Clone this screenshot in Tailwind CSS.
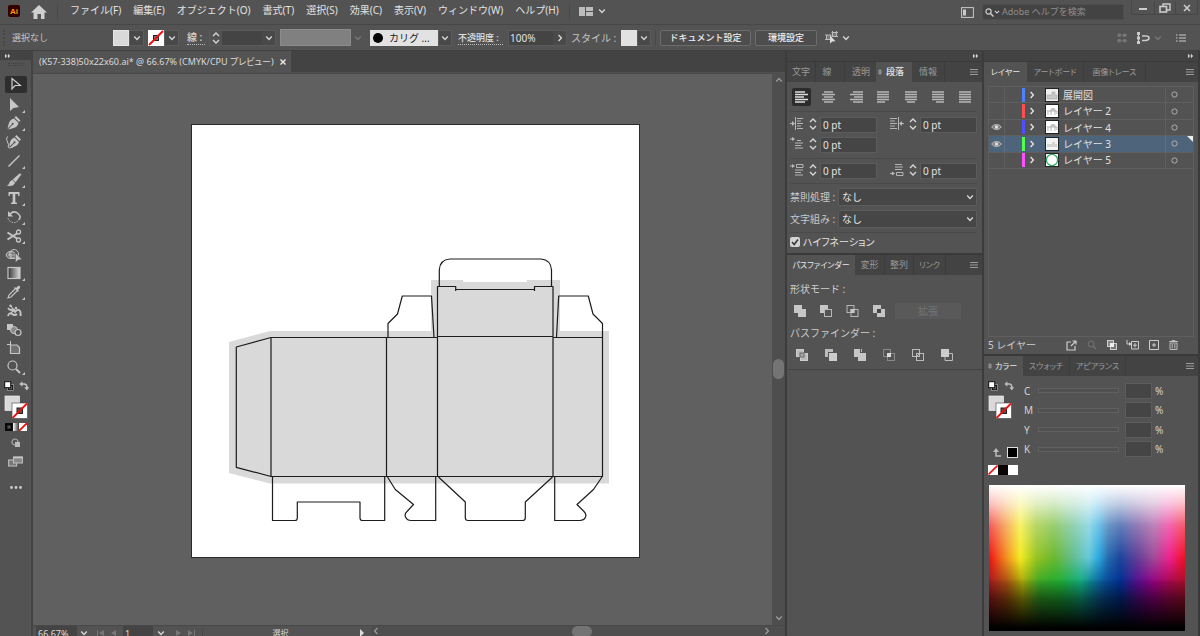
<!DOCTYPE html>
<html lang="ja">
<head>
<meta charset="utf-8">
<title>Illustrator</title>
<script src="https://cdn.jsdelivr.net/npm/@tailwindcss/browser@4"></script>
</head>
<body class="h-screen overflow-hidden flex flex-col bg-[#535353] text-[#d6d6d6] text-[10px] leading-4 font-['Noto_Sans','Noto_Sans_CJK_JP',sans-serif]">
<svg class="hidden" aria-hidden="true">
  <symbol id="down" viewBox="0 0 8 8"><path d="M1.2 2.6 4 5.4 6.8 2.6" fill="none" stroke="currentColor" stroke-width="1.4"/></symbol>
  <symbol id="right" viewBox="0 0 8 8"><path d="M2.6 1 5.4 4 2.6 7" fill="none" stroke="currentColor" stroke-width="1.4"/></symbol>
  <symbol id="left" viewBox="0 0 8 8"><path d="M5.4 1 2.6 4 5.4 7" fill="none" stroke="currentColor" stroke-width="1.2"/></symbol>
  <symbol id="updown" viewBox="0 0 8 14"><path d="M1 5 4 2 7 5M1 9 4 12 7 9" fill="none" stroke="currentColor" stroke-width="1.4"/></symbol>
  <symbol id="more" viewBox="0 0 6 6"><path d="M0 1 2 3 0 5ZM3 1 5 3 3 5Z" fill="currentColor" stroke="currentColor" stroke-width=".3"/></symbol>
  <symbol id="menu" viewBox="0 0 8 8"><path d="M0 1.5H8M0 4H8M0 6.5H8" stroke="currentColor" stroke-width="1.2"/></symbol>
  <symbol id="cycle" viewBox="0 0 4 6"><path d="M.5 2.2 2 .6 3.5 2.2ZM.5 3.8 2 5.4 3.5 3.8Z" fill="none" stroke="currentColor" stroke-width=".5"/></symbol>
  <symbol id="corner" viewBox="0 0 3 3"><path d="M3 0V3H0Z" fill="currentColor"/></symbol>
  <symbol id="eye" viewBox="0 0 12 8"><path d="M.8 4C3 .4 9 .4 11.2 4 9 7.6 3 7.6.8 4Z" fill="#7f7f7f" stroke="#c4c4c4" stroke-width="1"/><circle cx="6" cy="4" r="1.8" fill="#e0e0e0"/></symbol>
  <symbol id="defaults" viewBox="0 0 10 10"><rect x="3.5" y="3.5" width="6" height="6" fill="#111" stroke="#aaa" stroke-width=".7"/><rect x="5" y="5" width="3.2" height="3.2" fill="#666"/><rect x=".7" y=".7" width="6" height="6" fill="#fff" stroke="#111" stroke-width="1"/></symbol>
  <symbol id="swap" viewBox="0 0 10 10"><path d="M2.5 3H5Q8 3 8 7" fill="none" stroke="currentColor" stroke-width="1.6"/><path d="M3.4.3V5.7L.4 3ZM5.3 6.3H10.2L7.8 9.6Z" fill="currentColor"/></symbol>
  <symbol id="swatches" viewBox="0 0 24 24"><rect x="1" y="1" width="14.500" height="14.500" fill="#d9d9d9" stroke="#eee" stroke-width=".7"/><rect x="8" y="8" width="15.500" height="15.500" fill="#fff" stroke="#444" stroke-width=".6"/><rect x="13" y="13" width="5.500" height="5.500" fill="#535353" stroke="#222"/><path d="M8.500 23 23 8.500" stroke="#f01010" stroke-width="1.800"/></symbol>
  <symbol id="none" viewBox="0 0 10 10"><path fill="#fff" d="M0 0H10V10H0Z"/><path d="M.5 9.500 9.500.500" stroke="#f01010" stroke-width="1.600"/></symbol>
</svg>

<header class="h-[25px] shrink-0 flex items-start border-b border-[#474747] pt-px">
  <svg class="w-3 h-3 ml-2 mt-1" viewBox="0 0 12 12" aria-label="Ai"><rect width="12" height="12" rx="2" fill="#330000"/><text x="6" y="8.800" text-anchor="middle" font-family="Liberation Sans" font-weight="bold" font-size="8" fill="#ff9a00">Ai</text></svg>
  <svg class="w-4 h-4 ml-[11px] mt-[3px]" viewBox="0 0 16 16"><path d="M8 1 16 8.500H13.500V15H10V10H6.500V15H2.500V8.500H0Z" fill="#d0d0d0"/></svg>
  <div class="w-px h-4 bg-[#484848] ml-[10px] mt-[3px]"></div>
  <nav class="flex gap-3 ml-3 mt-px text-[#e2e2e2]">
    <button>ファイル(F)</button><button>編集(E)</button><button>オブジェクト(O)</button><button>書式(T)</button><button>選択(S)</button><button>効果(C)</button><button>表示(V)</button><button>ウィンドウ(W)</button><button>ヘルプ(H)</button>
  </nav>
  <div class="w-px h-4 bg-[#484848] ml-[10px] mt-[3px]"></div>
  <button class="flex items-center gap-[5px] ml-[9px] mt-[5px]" aria-label="ワークスペース">
    <svg class="w-[14px] h-[10px]" viewBox="0 0 14 10"><path d="M0 1H6V10H0ZM7 1H14V5H7ZM7 6H14V10H7Z" fill="#bdbdbd"/></svg>
    <svg class="w-2 h-2"><use href="#down"/></svg>
  </button>
  <div class="ml-auto flex items-start">
    <svg class="w-[13px] h-[11px] mt-[6px] mr-2" viewBox="0 0 13 11"><rect x=".600" y=".600" width="11.800" height="9.800" fill="none" stroke="#c8c8c8"/><path d="M2 2.500H5V8.500H2Z" fill="#c8c8c8"/></svg>
    <label class="flex items-center w-[142px] h-4 mt-[3px] px-[2px] bg-[#434343] border border-[#4e4e4e] rounded-xs">
      <svg class="w-[9px] h-[9px]" viewBox="0 0 9 9"><circle cx="3.500" cy="3.500" r="2.600" fill="none" stroke="#ccc" stroke-width="1.200"/><path d="M5.500 5.500 8.500 8.500" stroke="#ccc" stroke-width="1.500"/></svg>
      <svg class="w-[6px] h-[6px]"><use href="#down"/></svg>
      <input class="flex-1 min-w-0 ml-[2px] text-[9px] placeholder:text-[#8e8e8e] outline-none bg-transparent" aria-label="検索" placeholder="Adobe ヘルプを検索">
    </label>
    <div class="flex ml-[7px] h-[14px] border border-t-0 border-[#474747] rounded-b-xs mr-[2px]">
      <button class="w-[22px] flex justify-center items-center" aria-label="最小化"><svg class="w-2 h-2" viewBox="0 0 8 8"><path d="M0 5H8" stroke="#ccc" stroke-width="2"/></svg></button>
      <button class="w-[22px] flex justify-center items-center border-x border-[#474747]" aria-label="元に戻す"><svg class="w-3 h-[10px]" viewBox="0 0 12 10"><path d="M4 3V1H11V7H8" fill="none" stroke="#ccc" stroke-width="1.400"/><rect x="1" y="3.500" width="6.500" height="5.500" fill="none" stroke="#ccc" stroke-width="1.600"/></svg></button>
      <button class="w-[21px] flex justify-center items-center" aria-label="閉じる"><svg class="w-2 h-2" viewBox="0 0 8 8"><path d="M1 1 7 7M7 1 1 7" stroke="#ccc" stroke-width="1.600"/></svg></button>
    </div>
  </div>
</header>

<section class="h-[26px] shrink-0 flex items-center border-b border-[#404040]">
  <div class="w-[2px] h-4 ml-[3px] border-l-2 border-dotted border-[#474747]"></div>
  <p class="w-[97px] ml-[7px] text-[9px] text-[#c4c4c4]">選択なし</p>
  <div class="flex ml-1 h-4"><button class="w-4 bg-[#d9d9d9] border border-[#e6e6e6]" aria-label="塗り"></button><button class="w-[15px] bg-[#494949] border border-[#5c5c5c] grid place-items-center" aria-label="塗りメニュー"><svg class="w-2 h-2"><use href="#down"/></svg></button></div>
  <div class="flex ml-1 h-4"><button class="w-4" aria-label="線の色"><svg class="w-4 h-4" viewBox="0 0 16 16"><path fill="#fff" d="M0 0H16V16H0Z"/><rect x="5.500" y="5.500" width="5" height="5" fill="#777" stroke="#222"/><path d="M1 15 15 1" stroke="#f01010" stroke-width="2"/></svg></button><button class="w-[15px] bg-[#494949] border border-[#5c5c5c] grid place-items-center" aria-label="線メニュー"><svg class="w-2 h-2"><use href="#down"/></svg></button></div>
  <label for="sw" class="w-[18px] ml-2 border-b border-dotted border-[#bbb] whitespace-nowrap leading-[13px] font-medium">線 :</label>
  <div class="flex ml-1 h-4 border border-[#5a5a5a]">
    <button class="w-3 grid place-items-center" aria-label="線幅の増減"><svg class="w-2 h-[14px]"><use href="#updown"/></svg></button>
    <input id="sw" class="w-[40px] bg-[#444] outline-none">
    <button class="w-[13px] bg-[#494949] grid place-items-center" aria-label="線幅"><svg class="w-2 h-2"><use href="#down"/></svg></button>
  </div>
  <div class="flex ml-1 h-[17px]"><div class="w-[71px] bg-[#808080] border border-[#8c8c8c]"></div><button class="w-[14px] grid place-items-center text-[#777]" disabled aria-label="可変線幅"><svg class="w-2 h-2"><use href="#down"/></svg></button></div>
  <div class="flex ml-[5px] h-4">
    <button class="w-[68px] bg-[#e2e2e2] text-[#222] flex items-center gap-[6px] pl-[3px] whitespace-nowrap"><svg class="w-[10px] h-[10px]" viewBox="0 0 10 10"><circle cx="5" cy="5" r="5"/></svg>カリグ ...</button>
    <button class="w-[14px] bg-[#494949] border border-[#5c5c5c] grid place-items-center" aria-label="ブラシ"><svg class="w-2 h-2"><use href="#down"/></svg></button>
  </div>
  <label for="op" class="w-[45px] ml-[6px] text-[9px] font-medium border-b border-dotted border-[#bbb] whitespace-nowrap leading-[13px] text-[#e0e0e0]">不透明度 :</label>
  <div class="flex ml-[5px] h-4 border border-[#5a5a5a]">
    <input id="op" class="w-[44px] bg-[#444] outline-none px-px text-[#e2e2e2]" value="100%">
    <button class="w-[13px] bg-[#494949] grid place-items-center" aria-label="不透明度スライダー"><svg class="w-2 h-2"><use href="#right"/></svg></button>
  </div>
  <span class="w-[50px] ml-1 whitespace-nowrap text-[#c4c4c4]">スタイル :</span>
  <div class="flex h-4"><button class="w-4 bg-[#e2e2e2]" aria-label="グラフィックスタイル"></button><button class="w-[14px] bg-[#494949] border border-[#5c5c5c] grid place-items-center" aria-label="スタイルメニュー"><svg class="w-2 h-2"><use href="#down"/></svg></button></div>
  <div class="w-px h-4 bg-[#494949] ml-1"></div>
  <button class="w-[91px] h-4 ml-1 border border-[#6c6c6c] rounded-xs bg-[#4d4d4d] text-[9px] leading-3 font-medium text-[#eee] whitespace-nowrap">ドキュメント設定</button>
  <button class="w-[62px] h-4 ml-1 border border-[#6c6c6c] rounded-xs bg-[#4d4d4d] text-[9px] leading-3 font-medium text-[#eee]">環境設定</button>
  <button class="flex items-center ml-2 gap-1" aria-label="類似オブジェクトを選択"><svg class="w-[13px] h-[13px]" viewBox="0 0 13 13"><rect x="1.500" y="4" width="4.500" height="4.500" fill="#777" stroke="#bbb"/><rect x="7.500" y="1.500" width="4" height="4" fill="#777" stroke="#bbb"/><path d="M0 4H1M0 8.500H1M6.500 1.500H7.500M11.500 1.500H13M11.500 5.500H13M7.500 0V1M11.500 0V1" stroke="#bbb"/><path d="M5 4.500V12.500L7.300 10.500 10.500 10.300Z" fill="#ddd"/></svg><svg class="w-2 h-2"><use href="#down"/></svg></button>
  <div class="ml-auto flex items-center mr-[14px]">
    <svg class="w-[10px] h-[10px] mr-[10px]" viewBox="0 0 10 10"><path d="M1 1H3.500V3.500H1ZM6.500 1H9V3.500H6.500ZM1 6.500H3.500V9H1ZM6.500 6.500H9V9H6.500ZM0 2H10M0 7.800H10" fill="#777" stroke="#777" stroke-width=".800"/></svg>
    <svg class="w-[13px] h-3 mr-1" viewBox="0 0 13 12"><path d="M0 0H3V3H0ZM0 4.500H3V7.500H0ZM0 9H3V12H0ZM1 0H2V12H1Z" fill="#ccc"/><path d="M5 4H9Q12 4 12 6T9 8.500H5" fill="none" stroke="#ccc" stroke-width="1.600"/></svg>
    <svg class="w-2 h-2 mr-[14px] text-[#777]"><use href="#down"/></svg>
    <svg class="w-[10px] h-2" viewBox="0 0 10 8"><path d="M0 1H1.500M0 4H1.500M0 7H1.500M3 1H10M3 4H10M3 7H10" stroke="#ccc" stroke-width="1.100"/></svg>
  </div>
</section>

<main class="flex-1 min-h-0 flex">
  <aside class="w-[33px] shrink-0 border-r-2 border-[#434343] flex flex-col items-center">
    <div class="w-full h-[9px] bg-[#434343] pl-[5px]"><svg class="w-[6px] h-[6px] mt-[2px]"><use href="#more"/></svg></div>
    <div class="w-4 h-[3px] mt-[3px] border-y border-dotted border-[#414141]"></div>
    <div class="grid grid-rows-16 h-[300px] mt-[9px] text-[#c6c6c6]">
      <button class="w-[22px] h-[17px] rounded-xs bg-[#2e2e2e] grid place-items-center self-center" aria-label="選択"><svg class="w-3 h-[14px]" viewBox="0 0 12 14"><path d="M2 1.500V12L5 8.500 10.500 8.500Z" fill="none" stroke="#d0d0d0" stroke-width="1.200"/></svg></button>
      <button class="flex items-end justify-center" aria-label="ダイレクト選択"><svg class="w-4 h-4" viewBox="0 0 16 16"><path d="M4 1V14L7.500 11 13 10Z" fill="currentColor"/></svg><svg class="w-[3px] h-[3px]"><use href="#corner"/></svg></button>
      <button class="flex items-end justify-center" aria-label="ペン"><svg class="w-4 h-4" viewBox="0 0 16 16"><path d="M10 1 14.500 5.500 13 7 8.500 2.500ZM8 3.500 12.500 8Q11.500 12.500 6 13.500L2 14.500 6.500 9.800A1 1 0 1 0 5.800 9.200L1.500 13.800 2.500 9.500Q3.500 4.500 8 3.500Z" fill="currentColor"/></svg><svg class="w-[3px] h-[3px]"><use href="#corner"/></svg></button>
      <button class="flex items-end" aria-label="曲線"><svg class="w-[17px] h-4" viewBox="0 0 17 16"><path d="M11.500 1 16 5.500 14.500 7 10 2.500ZM9.500 3.500 14 8Q13 12.500 5 14L9.300 9.300A1 1 0 1 0 8.600 8.600L4.500 13Q4 5 9.500 3.500Z" fill="currentColor"/><path d="M2.500 2.500Q.5 5 2.500 8T3 13Q4 15 8 13" fill="none" stroke="currentColor"/></svg></button>
      <button class="flex items-end justify-center" aria-label="直線"><svg class="w-4 h-4" viewBox="0 0 16 16"><path d="M2.500 13.500 13.500 2.500" stroke="currentColor" stroke-width="1.400"/></svg><svg class="w-[3px] h-[3px]"><use href="#corner"/></svg></button>
      <button class="flex items-end justify-center" aria-label="ブラシ"><svg class="w-4 h-4" viewBox="0 0 16 16"><path d="M14 1.500 15 2.500 9.500 10 7 7.500ZM6.300 8.300 8.800 10.800Q7.500 14.500 1.500 13.500 3.500 12.500 3.500 11T6.300 8.300Z" fill="currentColor" stroke="currentColor" stroke-width=".600"/></svg><svg class="w-[3px] h-[3px]"><use href="#corner"/></svg></button>
      <button class="flex items-end justify-center" aria-label="文字"><svg class="w-4 h-4" viewBox="0 0 16 16"><path d="M2.500 2H13.500V6H12.300L11.800 4H9.300V12.300L11 12.800V14H5V12.800L6.700 12.300V4H4.200L3.700 6H2.500Z" fill="currentColor"/></svg><svg class="w-[3px] h-[3px]"><use href="#corner"/></svg></button>
      <button class="flex items-end justify-center" aria-label="回転"><svg class="w-4 h-4" viewBox="0 0 16 16"><path d="M4 5Q8 1 12 4.500T12.500 11" fill="none" stroke="currentColor" stroke-width="1.600"/><path d="M12 12Q8 15 4.500 12.500T2.500 8" fill="none" stroke="currentColor" stroke-dasharray="1.500 1.200"/><path d="M2 2V7.500H7Z" fill="currentColor"/></svg><svg class="w-[3px] h-[3px]"><use href="#corner"/></svg></button>
      <button class="flex items-end justify-center" aria-label="はさみ"><svg class="w-4 h-4" viewBox="0 0 16 16"><path d="M1.500 4.500 11 10.500M1.500 11.500 11 5.500" stroke="currentColor" stroke-width="2"/><circle cx="12.500" cy="4" r="2" fill="none" stroke="currentColor" stroke-width="1.300"/><circle cx="12.500" cy="12" r="2" fill="none" stroke="currentColor" stroke-width="1.300"/></svg><svg class="w-[3px] h-[3px]"><use href="#corner"/></svg></button>
      <button class="flex items-end" aria-label="シェイプ形成"><svg class="w-[18px] h-4" viewBox="0 0 18 16"><ellipse cx="6" cy="8" rx="4.800" ry="3.600" fill="#777" stroke="currentColor"/><circle cx="9" cy="7" r="4.500" fill="none" stroke="currentColor"/><path d="M3 8H10M6 5V11" stroke="currentColor" stroke-width=".800"/><path d="M10.500 6V15.500L13 13 17 12.500Z" fill="currentColor" stroke="#535353" stroke-width=".500"/></svg></button>
      <button class="flex items-end justify-center" aria-label="グラデーション"><svg class="w-4 h-4" viewBox="0 0 16 16"><defs><linearGradient id="tg"><stop stop-color="#333"/><stop offset="1" stop-color="#ddd"/></linearGradient></defs><rect x="2" y="2.500" width="12" height="11" fill="url(#tg)" stroke="currentColor" stroke-width="1.200"/></svg><svg class="w-[3px] h-[3px]"><use href="#corner"/></svg></button>
      <button class="flex items-end justify-center" aria-label="スポイト"><svg class="w-4 h-4" viewBox="0 0 16 16"><path d="M9 5 3 11 2 14 5 13 11 7" fill="none" stroke="currentColor" stroke-width="1.100"/><path d="M8 4 9 3 10 4 12 2Q14.500 1 14 4L12 6 13 7 12 8Z" fill="currentColor"/></svg><svg class="w-[3px] h-[3px]"><use href="#corner"/></svg></button>
      <button class="flex items-end justify-center" aria-label="パペットワープ"><svg class="w-4 h-4" viewBox="0 0 16 16"><path d="M2 5Q4 8 7 6.500L9 9Q11 6 13 7T14.500 13M2 13Q3 9 6 11T11 11" fill="none" stroke="currentColor" stroke-width="1.900"/><path d="M5 3 8 8M4 11 9 6" stroke="currentColor" stroke-width="1.200"/><circle cx="4.500" cy="2.800" r="1.200" fill="currentColor"/><circle cx="10" cy="5" r="1.200" fill="currentColor"/></svg><svg class="w-[3px] h-[3px]" viewBox="0 0 3 3"></svg></button>
      <button class="flex items-end justify-center" aria-label="ブレンド"><svg class="w-4 h-4" viewBox="0 0 16 16"><path d="M1 2H7V8H1Z" fill="currentColor"/><circle cx="8" cy="8" r="3.500" fill="#888" stroke="currentColor"/><circle cx="12" cy="10.500" r="3" fill="#535353" stroke="currentColor" stroke-width="1.200"/></svg><svg class="w-[3px] h-[3px]" viewBox="0 0 3 3"></svg></button>
      <button class="flex items-end justify-center" aria-label="アートボード"><svg class="w-4 h-4" viewBox="0 0 16 16"><path d="M4.500 1V5M1 4.500H4" stroke="currentColor"/><path d="M4.500 5H11L13.500 7.500V13.500H4.500Z" fill="#707070" stroke="currentColor" stroke-width="1.200"/></svg><svg class="w-[3px] h-[3px]" viewBox="0 0 3 3"></svg></button>
      <button class="flex items-end justify-center" aria-label="ズーム"><svg class="w-4 h-4" viewBox="0 0 16 16"><circle cx="6.500" cy="6.500" r="4.500" fill="none" stroke="currentColor" stroke-width="1.200"/><path d="M10 10 14 14" stroke="currentColor" stroke-width="1.800"/></svg><svg class="w-[3px] h-[3px]"><use href="#corner"/></svg></button>
    </div>
    <div class="flex w-full h-3 mt-[5px] pl-1 pr-[2px] justify-between items-center text-[#c6c6c6]"><svg class="w-[10px] h-[10px]"><use href="#defaults"/></svg><svg class="w-[10px] h-[10px]"><use href="#swap"/></svg></div>
    <svg class="w-6 h-6 shrink-0 mt-[3px]"><use href="#swatches"/></svg>
    <svg class="w-[22px] h-2 shrink-0 mt-1" viewBox="0 0 22 8"><rect width="8" height="8" fill="#0a0a0a"/><rect x="2.500" y="2.500" width="3" height="3" fill="#555"/><defs><linearGradient id="mg"><stop stop-color="#fff"/><stop offset="1" stop-color="#333"/></linearGradient></defs><rect x="8" width="6" height="8" fill="url(#mg)"/><rect x="14" width="8" height="8" fill="#fff"/><path d="M14 8 22 0" stroke="#f01010" stroke-width="1.800"/></svg>
    <svg class="w-[10px] h-[10px] shrink-0 mt-[7px]" viewBox="0 0 10 10"><circle cx="4" cy="4" r="3" fill="none" stroke="#aaa" stroke-width="1.200"/><path d="M4 4H9V9H4Z" fill="#bbb"/></svg>
    <svg class="w-[15px] h-[11px] shrink-0 mt-2" viewBox="0 0 15 11"><rect x=".6" y="4" width="8" height="6" fill="#777" stroke="#bbb" stroke-width="1.100"/><rect x="5.500" y="1" width="9" height="6" fill="#888" stroke="#bbb" stroke-width="1.100"/><path d="M5.500 1.500H14.500" stroke="#ccc" stroke-width="1.500"/></svg>
    <svg class="w-3 h-[3px] shrink-0 mt-[19px]" viewBox="0 0 12 3"><path d="M1.500 1.500H1.510M6 1.500H6.010M10.500 1.500H10.510" stroke="#ccc" stroke-width="2.800" stroke-linecap="round"/></svg>
  </aside>

  <section class="flex-1 min-w-0 flex flex-col">
    <div class="h-[22px] shrink-0 bg-[#434343] border-b border-[#505050] flex">
      <div class="w-[258px] bg-[#535353] flex items-center pl-[6px] pr-[5px] justify-between text-[#dadada]"><span class="whitespace-nowrap text-[9px] [font-feature-settings:'palt']">(K57-338)50x22x60.ai* @ 66.67% (CMYK/CPU プレビュー)</span>
      <button aria-label="閉じる"><svg class="w-[6px] h-[6px]" viewBox="0 0 6 6"><path d="M.500.500 5.500 5.500M5.500.500.500 5.500" stroke="#eee" stroke-width="1.400"/></svg></button></div>
    </div>
    <div class="flex-1 min-h-0 flex">
      <div class="flex-1 min-w-0 overflow-hidden bg-[#606060] border-t border-[#4a4a4a] pl-[158px] pt-[50px]">
        <svg class="w-[449px] h-[434px]" viewBox="191 124 449 434" aria-label="箱の展開図">
          <rect x="191.500" y="124.500" width="448" height="433" fill="#fff" stroke="#2a2a2a"/>
          <path d="M229 342 270 331H431V280H463V282H527V280H560V331H609V483.500H270L229 473Z" fill="#d9d9d9"/>
          <g fill="none" stroke="#1c1c1c" stroke-width="1.200" stroke-linejoin="round">
            <path d="M271 337.500 236.300 347V467.300L271 476.500M271 337.500H437.500M553 337.500H602.500V476.500H271V337.500M386.500 337.500V476.500M437.500 476.500V286.500H455.700V291M455.700 289.500H534.500M534.500 291V286.500H553V476.500M437.500 336.500H553"/>
            <path d="M439.300 286.500V270Q440 259.500 450 259H541Q551 260 551.500 270V286.500"/>
            <path d="M388 337.500V323.500L397.500 314 402.300 296H431.500L434 337.500M556.500 337.500 558.700 296H588.300L593 314 602.500 323.500V337.500"/>
            <path d="M272.500 476.500V520.500H295Q297.300 520.500 297.300 518V502H360V518Q360 520.500 362.500 520.500H384.700V476.500"/>
            <path d="M387.500 477 395.300 489.500 413.500 504.500 407 511.500C403 515 406 520.500 411 520.500H435.700V477"/>
            <path d="M438.500 477 465.300 502V518Q465.500 520.500 468 520.500H522.500Q525.300 520.500 525.300 518V502L552.500 477"/>
            <path d="M554.700 477V520.500H580C585 520.500 588 515.500 584 511.500L577 504.500 593.500 489.500 602 477"/>
          </g>
        </svg>
      </div>
      <div class="w-[13px] bg-[#4e4e4e] flex flex-col items-center justify-between py-[3px] text-[#999]">
        <svg class="w-2 h-2 rotate-180"><use href="#down"/></svg>
        <div class="w-[11px] h-5 rounded-full bg-[#747474] mt-[40px]"></div>
        <svg class="w-2 h-2"><use href="#down"/></svg>
      </div>
    </div>
    <div class="h-[11px] shrink-0 overflow-hidden border-t border-[#484848]">
      <div class="h-[14px] flex items-center text-[9px] leading-none">
        <input class="w-[41px] h-full ml-[3px] px-[2px] bg-[#444] outline-none text-[#ddd]" value="66.67%" aria-label="ズーム率">
        <button class="w-[14px] grid place-items-center" aria-label="ズームメニュー"><svg class="w-2 h-2"><use href="#down"/></svg></button>
        <svg class="w-[22px] h-2 mx-[5px] text-[#777]" viewBox="0 0 22 8"><path d="M1 1V7H2V1ZM8 1V7L3 4ZM20 1V7L15 4Z" fill="currentColor"/></svg>
        <input class="w-[30px] h-full px-[2px] bg-[#444] outline-none text-[#ddd]" value="1" aria-label="アートボード番号">
        <button class="w-[15px] grid place-items-center" aria-label="アートボードメニュー"><svg class="w-2 h-2"><use href="#down"/></svg></button>
        <svg class="w-[22px] h-2 mx-[6px] text-[#777]" viewBox="0 0 22 8"><path d="M2 1V7L7 4ZM14 1V7L19 4ZM20 1V7H21V1Z" fill="currentColor"/></svg>
        <div class="w-[156px] text-center text-[8px] border-l border-[#484848]">選択</div>
        <svg class="w-2 h-2 mr-[5px]" viewBox="0 0 8 8"><path d="M2 0V8L6 4Z" fill="#ddd"/></svg>
        <div class="flex-1 flex items-center bg-[#4e4e4e] h-full justify-between pl-px pr-[14px] pb-1 text-[#999]"><svg class="w-2 h-2"><use href="#left"/></svg><div class="w-5 h-[11px] rounded-full bg-[#747474] ml-5"></div><svg class="w-2 h-2"><use href="#right"/></svg></div>
      </div>
    </div>
  </section>

  <aside class="w-[199px] shrink-0 border-x-2 border-[#3c3c3c] flex flex-col">
    <div class="h-[10px] bg-[#434343] flex justify-end pr-[3px] pt-[2px]"><svg class="w-[6px] h-[6px]"><use href="#more"/></svg></div>
    <div class="h-[21px] shrink-0 bg-[#434343] flex text-[9px] text-[#9a9a9a] border-t border-[#3a3a3a]">
      <button class="w-[29px] border-r border-[#3c3c3c]">文字</button><button class="w-[29px] border-r border-[#3c3c3c] pr-[6px]">線</button><button class="w-[31px] pl-px">透明</button><button class="w-[36px] bg-[#535353] text-[#e6e6e6] font-medium flex items-center gap-1 pl-[2px]"><svg class="w-1 h-[6px]"><use href="#cycle"/></svg>段落</button><button class="w-[33px] border-r border-[#3c3c3c]">情報</button>
      <button class="ml-auto mr-1" aria-label="パネルメニュー"><svg class="w-2 h-2"><use href="#menu"/></svg></button>
    </div>
    <div class="pl-[3px] pr-[5px] pt-[6px]">
      <div class="flex justify-between items-center pl-[2px] pr-[2px] h-[18px] text-[#b8b8b8]">
        <button class="w-[19px] h-[18px] rounded-xs bg-[#2c2c2c] grid place-items-center" aria-label="左揃え"><svg class="w-[13px] h-3" viewBox="0 0 13 12"><path d="M0 1H10M0 3.500H13M0 6H9M0 8.500H13M0 11H10" stroke="#ddd" stroke-width="1.300"/></svg></button>
        <button class="w-[19px] grid place-items-center" aria-label="中央揃え"><svg class="w-[13px] h-3" viewBox="0 0 13 12"><path d="M2 1H11M0 3.500H13M2 6H11M0 8.500H13M2 11H11" stroke="currentColor" stroke-width="1.300"/></svg></button>
        <button class="w-[19px] grid place-items-center" aria-label="右揃え"><svg class="w-[13px] h-3" viewBox="0 0 13 12"><path d="M3 1H13M0 3.500H13M4 6H13M0 8.500H13M3 11H13" stroke="currentColor" stroke-width="1.300"/></svg></button>
        <button class="w-[19px] grid place-items-center" aria-label="均等配置（最終行左揃え）"><svg class="w-3 h-3" viewBox="0 0 12 12"><path d="M0 1H12M0 3.500H12M0 6H12M0 8.500H12M0 11H8" stroke="currentColor" stroke-width="1.300"/></svg></button>
        <button class="w-[19px] grid place-items-center" aria-label="均等配置（最終行中央揃え）"><svg class="w-3 h-3" viewBox="0 0 12 12"><path d="M0 1H12M0 3.500H12M0 6H12M0 8.500H12M2 11H10" stroke="currentColor" stroke-width="1.300"/></svg></button>
        <button class="w-[19px] grid place-items-center" aria-label="均等配置（最終行右揃え）"><svg class="w-3 h-3" viewBox="0 0 12 12"><path d="M0 1H12M0 3.500H12M0 6H12M0 8.500H12M4 11H12" stroke="currentColor" stroke-width="1.300"/></svg></button>
        <button class="w-[19px] grid place-items-center" aria-label="両端揃え"><svg class="w-3 h-3" viewBox="0 0 12 12"><path d="M0 1H12M0 3.500H12M0 6H12M0 8.500H12M0 11H12" stroke="currentColor" stroke-width="1.300"/></svg></button>
      </div>
      <div class="grid grid-cols-[100px_1fr] gap-y-1 mt-[5px] pt-[5px] border-t border-[#4a4a4a] pb-[5px]">
        <label class="flex h-4"><svg class="w-[14px] h-[14px] mr-[3px]" viewBox="0 0 14 14"><path d="M0 6.500H3M5.500 0V13M7 1.500H13M7 4H11M7 6.500H13M7 9H11M7 11.500H13" stroke="#b5b5b5"/><path d="M2 4 5 6.500 2 9Z" fill="#bbb"/></svg><svg class="w-3 h-[14px] mr-px"><use href="#updown"/></svg><input class="w-[57px] bg-[#454545] border border-[#5c5c5c] px-[2px] outline-none text-[#e2e2e2]" value="0 pt" aria-label="左インデント"></label>
        <label class="flex h-4"><svg class="w-[14px] h-[14px] mr-[3px]" viewBox="0 0 14 14"><path d="M14 6.500H11M8.500 0V13M0 1.500H7M0 4H5M0 6.500H7M0 9H5M0 11.500H7" stroke="#b5b5b5"/><path d="M12 4 9 6.500 12 9Z" fill="#bbb"/></svg><svg class="w-3 h-[14px] mr-px"><use href="#updown"/></svg><input class="w-[57px] bg-[#454545] border border-[#5c5c5c] px-[2px] outline-none text-[#e2e2e2]" value="0 pt" aria-label="右インデント"></label>
        <label class="flex h-4"><svg class="w-[14px] h-[14px] mr-[3px]" viewBox="0 0 14 14"><path d="M0 2H3M7 3.500H11M5 6H13M5 8.500H11M5 11H13" stroke="#b5b5b5"/><path d="M2 0 5 2 2 4Z" fill="#bbb"/></svg><svg class="w-3 h-[14px] mr-px"><use href="#updown"/></svg><input class="w-[57px] bg-[#454545] border border-[#5c5c5c] px-[2px] outline-none text-[#e2e2e2]" value="0 pt" aria-label="1行目左インデント"></label>
      </div>
      <div class="grid grid-cols-[100px_1fr] pt-1 border-t border-[#4a4a4a] pb-1">
        <label class="flex h-4"><svg class="w-[14px] h-[14px] mr-[3px]" viewBox="0 0 14 14"><path d="M0 3H3M6.500 1.500H13V4.500H6.500ZM5 7H13M5 9.500H11M5 12H13" fill="none" stroke="#b5b5b5"/><path d="M2 1 5 3 2 5Z" fill="#bbb"/></svg><svg class="w-3 h-[14px] mr-px"><use href="#updown"/></svg><input class="w-[57px] bg-[#454545] border border-[#5c5c5c] px-[2px] outline-none text-[#e2e2e2]" value="0 pt" aria-label="段落前のアキ"></label>
        <label class="flex h-4"><svg class="w-[14px] h-[14px] mr-[3px]" viewBox="0 0 14 14"><path d="M0 10.500H3M6.500 9.500H13V12.500H6.500ZM5 1.500H12M5 4H13M5 6.500H12" fill="none" stroke="#b5b5b5"/><path d="M2 8.500 5 10.500 2 12.500Z" fill="#bbb"/></svg><svg class="w-3 h-[14px] mr-px"><use href="#updown"/></svg><input class="w-[57px] bg-[#454545] border border-[#5c5c5c] px-[2px] outline-none text-[#e2e2e2]" value="0 pt" aria-label="段落後のアキ"></label>
      </div>
      <div class="border-y border-[#4a4a4a] pt-1 pb-1 grid gap-1">
        <div class="flex items-center"><label for="kin" class="w-[48px] whitespace-nowrap text-[#c8c8c8]">禁則処理 :</label><span class="flex-1 grid items-center"><select id="kin" class="[grid-area:1/1] h-[18px] appearance-none bg-[#464646] border border-[#5c5c5c] rounded-xs px-[3px] outline-none text-[#e6e6e6]"><option>なし</option></select><svg class="[grid-area:1/1] justify-self-end w-2 h-2 mr-[3px] pointer-events-none"><use href="#down"/></svg></span></div>
        <div class="flex items-center"><label for="kumi" class="w-[48px] whitespace-nowrap text-[#c8c8c8]">文字組み :</label><span class="flex-1 grid items-center"><select id="kumi" class="[grid-area:1/1] h-[18px] appearance-none bg-[#464646] border border-[#5c5c5c] rounded-xs px-[3px] outline-none text-[#e6e6e6]"><option>なし</option></select><svg class="[grid-area:1/1] justify-self-end w-2 h-2 mr-[3px] pointer-events-none"><use href="#down"/></svg></span></div>
      </div>
      <label class="flex items-center gap-[3px] h-[18px] text-[#e2e2e2] [font-feature-settings:'palt']"><span class="grid"><input type="checkbox" checked class="[grid-area:1/1] appearance-none w-[10px] h-[10px] rounded-xs bg-[#d2d2d2]"><svg class="[grid-area:1/1] w-[10px] h-[10px] pointer-events-none" viewBox="0 0 10 10"><path d="M2 5 4.200 7.500 8 2.500" fill="none" stroke="#333" stroke-width="1.500"/></svg></span>ハイフネーション</label>
    </div>
    <div class="h-[22px] mt-[2px] shrink-0 bg-[#434343] flex text-[#9a9a9a] border-t-2 border-[#3a3a3a] text-[9px] [font-feature-settings:'palt']">
      <button class="w-[68px] bg-[#535353] text-[#e6e6e6] text-[8px] whitespace-nowrap">パスファインダー</button><button class="w-[30px] border-r border-[#3c3c3c]">変形</button><button class="w-[29px] border-r border-[#3c3c3c]">整列</button><button class="w-[32px] border-r border-[#3c3c3c] text-[8px]">リンク</button>
      <button class="ml-auto mr-1" aria-label="パネルメニュー"><svg class="w-2 h-2"><use href="#menu"/></svg></button>
    </div>
    <div class="px-[3px] pt-[6px] pb-[6px] border-b border-[#444]">
      <p class="text-[#ccc]">形状モード :</p>
      <div class="flex items-center h-4 mt-[6px] pl-1 gap-[14px]">
        <button aria-label="合体"><svg class="w-3 h-3" viewBox="0 0 12 12"><path d="M0 0H8V4H12V12H4V8H0Z" fill="#c6c6c6"/></svg></button>
        <button aria-label="前面オブジェクトで型抜き"><svg class="w-3 h-3" viewBox="0 0 12 12"><path d="M0 0H8V4H4V8H0Z" fill="#c6c6c6"/><rect x="4.500" y="4.500" width="7" height="7" fill="#535353" stroke="#b8b8b8"/></svg></button>
        <button aria-label="交差"><svg class="w-[13px] h-3" viewBox="0 0 12 12"><rect x=".500" y=".500" width="7" height="7" fill="none" stroke="#b8b8b8"/><rect x="4.500" y="4.500" width="7" height="7" fill="none" stroke="#b8b8b8"/><path d="M4 4H8V8H4Z" fill="#c6c6c6"/></svg></button>
        <button aria-label="中マド"><svg class="w-3 h-3" viewBox="0 0 12 12"><path d="M0 0H8V4H12V12H4V8H0Z" fill="#c6c6c6"/><path d="M4 4H8V8H4Z" fill="#444"/></svg></button>
        <button disabled class="w-[66px] h-4 ml-[-4px] bg-[#595959] text-[#747474] leading-3">拡張</button>
      </div>
      <p class="text-[#ccc] mt-[6px]">パスファインダー :</p>
      <div class="flex items-center h-4 mt-[6px] pl-[6px] gap-[17px]">
        <button aria-label="分割"><svg class="w-3 h-3" viewBox="0 0 12 12"><rect x=".500" y=".500" width="7" height="7" fill="#bbb" stroke="#ccc"/><rect x="4.500" y="4.500" width="7" height="7" fill="#bbb" stroke="#ccc"/><rect x="4" y="4" width="4" height="4" fill="#aaa" stroke="#666"/></svg></button>
        <button aria-label="刈り込み"><svg class="w-3 h-3" viewBox="0 0 12 12"><path d="M0 0H8V3H3V8H0Z" fill="#bbb"/><path d="M4 4H12V12H4Z" fill="#ccc"/></svg></button>
        <button aria-label="合流"><svg class="w-3 h-3" viewBox="0 0 12 12"><path d="M0 0H6V4H12V12H4V8H0Z" fill="#c6c6c6"/><path d="M7 0H8V3H7Z" fill="#bbb"/></svg></button>
        <button aria-label="切り抜き"><svg class="w-3 h-3" viewBox="0 0 12 12"><rect x=".500" y=".500" width="7" height="7" fill="none" stroke="#888"/><rect x="4.500" y="4.500" width="7" height="7" fill="none" stroke="#888"/><path d="M4 4H8V8H4Z" fill="#ddd"/></svg></button>
        <button aria-label="アウトライン"><svg class="w-3 h-3" viewBox="0 0 12 12"><rect x=".500" y=".500" width="7" height="7" fill="none" stroke="#bbb"/><rect x="4.500" y="4.500" width="7" height="7" fill="none" stroke="#bbb"/><path d="M4 8 8 4" stroke="#bbb"/></svg></button>
        <button aria-label="背面オブジェクトで型抜き"><svg class="w-3 h-3" viewBox="0 0 12 12"><path d="M4 8V11.500H11.500V4.500H8" fill="none" stroke="#bbb"/><path d="M0 0H8V8H0Z" fill="#ccc"/></svg></button>
      </div>
    </div>
  </aside>

  <aside class="w-[216px] shrink-0 flex flex-col border-r-2 border-[#3a3a3a]">
    <div class="h-[10px] shrink-0 bg-[#434343] flex justify-end pr-1 pt-[2px]"><svg class="w-[6px] h-[6px]"><use href="#more"/></svg></div>
    <div class="h-[21px] shrink-0 bg-[#434343] flex text-[#9a9a9a] text-[8px] [font-feature-settings:'palt'] border-t border-[#3a3a3a]">
      <button class="w-[43px] bg-[#535353] text-[#e6e6e6]">レイヤー</button><button class="w-[57px] border-r border-[#3c3c3c]">アートボード</button><button class="w-[62px] border-r border-[#3c3c3c]">画像トレース</button>
      <button class="ml-auto mr-1" aria-label="パネルメニュー"><svg class="w-2 h-2"><use href="#menu"/></svg></button>
    </div>
    <div class="mx-1 mt-1 h-[251px] shrink-0 border border-[#5f5f5f]">
      <ul class="grid grid-rows-5 h-[82px] text-[#e0e0e0]">
        <li class="flex items-center border-b border-[#5f5f5f]"><span class="w-4 h-full border-r border-[#5f5f5f]"></span><span class="w-[17px]"></span><i class="w-[3px] h-[14px] bg-[#4f80ff]"></i><svg class="w-2 h-2 ml-[3px] mr-1 shrink-0"><use href="#right"/></svg><svg class="w-[14px] h-[14px] ml-[5px] mr-1 shrink-0" viewBox="0 0 14 14"><rect x=".500" y=".500" width="13" height="13" fill="#eee" stroke="#222"/><path d="M2 7H7V4H10V7H12V11H2Z" fill="#c8c8c8" stroke="#999" stroke-width=".500"/></svg><span class="flex-1">展開図</span><button class="w-[28px] h-full pl-[5px] border-l border-[#5f5f5f]" aria-label="ターゲット"><svg class="w-[7px] h-[7px]" viewBox="0 0 8 8"><circle cx="4" cy="4" r="3" fill="none" stroke="#bbb"/></svg></button></li>
        <li class="flex items-center border-b border-[#5f5f5f]"><span class="w-4 h-full border-r border-[#5f5f5f]"></span><span class="w-[17px]"></span><i class="w-[3px] h-[14px] bg-[#ff4f4f]"></i><svg class="w-2 h-2 ml-[3px] mr-1 shrink-0"><use href="#right"/></svg><svg class="w-[14px] h-[14px] ml-[5px] mr-1 shrink-0" viewBox="0 0 14 14"><rect x=".500" y=".500" width="13" height="13" fill="#fff" stroke="#222"/><path d="M2 7H12M3 7V11M6 11V5H10V11M8 4V7M12 7V10" fill="none" stroke="#999" stroke-width=".700"/></svg><span class="flex-1">レイヤー 2</span><button class="w-[28px] h-full pl-[5px] border-l border-[#5f5f5f]" aria-label="ターゲット"><svg class="w-[7px] h-[7px]" viewBox="0 0 8 8"><circle cx="4" cy="4" r="3" fill="none" stroke="#bbb"/></svg></button></li>
        <li class="flex items-center border-b border-[#5f5f5f]"><span class="w-4 h-full border-r border-[#5f5f5f] grid place-items-center"><svg class="w-[11px] h-2"><use href="#eye"/></svg></span><span class="w-[17px]"></span><i class="w-[3px] h-[14px] bg-[#4f4fff]"></i><svg class="w-2 h-2 ml-[3px] mr-1 shrink-0"><use href="#right"/></svg><svg class="w-[14px] h-[14px] ml-[5px] mr-1 shrink-0" viewBox="0 0 14 14"><rect x=".500" y=".500" width="13" height="13" fill="#fff" stroke="#222"/><path d="M2 7H12M3 7V11M6 11V5H10V11M8 4V7M12 7V10" fill="none" stroke="#999" stroke-width=".700"/></svg><span class="flex-1">レイヤー 4</span><button class="w-[28px] h-full pl-[5px] border-l border-[#5f5f5f]" aria-label="ターゲット"><svg class="w-[7px] h-[7px]" viewBox="0 0 8 8"><circle cx="4" cy="4" r="3" fill="none" stroke="#bbb"/></svg></button></li>
        <li class="flex items-center bg-[#4e647b] border-b border-[#5f5f5f]"><span class="w-4 h-full border-r border-[#5f7085] grid place-items-center"><svg class="w-[11px] h-2"><use href="#eye"/></svg></span><span class="w-[17px]"></span><i class="w-[3px] h-[14px] bg-[#4fff4f]"></i><svg class="w-2 h-2 ml-[3px] mr-1 shrink-0"><use href="#right"/></svg><svg class="w-[14px] h-[14px] ml-[5px] mr-1 shrink-0" viewBox="0 0 14 14"><rect x=".500" y=".500" width="13" height="13" fill="#f4f4f4" stroke="#222"/><path d="M2 7H7V5H10V7H12V10H2Z" fill="#d4d4d4"/></svg><span class="flex-1">レイヤー 3</span><button class="w-[28px] h-full pl-[5px] border-l border-[#5f7085] flex items-center" aria-label="ターゲット"><svg class="w-[7px] h-[7px]" viewBox="0 0 8 8"><circle cx="4" cy="4" r="3" fill="none" stroke="#bbb"/></svg><svg class="w-[6px] h-[6px] self-start ml-auto" viewBox="0 0 6 6"><path d="M0 0H6V6Z" fill="#eee"/></svg></button></li>
        <li class="flex items-center border-b border-[#5f5f5f]"><span class="w-4 h-full border-r border-[#5f5f5f]"></span><span class="w-[17px]"></span><i class="w-[3px] h-[14px] bg-[#ff4fff]"></i><svg class="w-2 h-2 ml-[3px] mr-1 shrink-0"><use href="#right"/></svg><svg class="w-[14px] h-[14px] ml-[5px] mr-1 shrink-0" viewBox="0 0 14 14"><rect x=".500" y=".500" width="13" height="13" fill="#fff" stroke="#222"/><circle cx="7" cy="7" r="5.600" fill="#fff" stroke="#2fa866" stroke-width="1.300"/></svg><span class="flex-1">レイヤー 5</span><button class="w-[28px] h-full pl-[5px] border-l border-[#5f5f5f]" aria-label="ターゲット"><svg class="w-[7px] h-[7px]" viewBox="0 0 8 8"><circle cx="4" cy="4" r="3" fill="none" stroke="#bbb"/></svg></button></li>
      </ul>
    </div>
    <div class="h-4 shrink-0 flex items-center pl-1 pr-[20px] text-[#ccc]">
      <span class="mr-auto">5 レイヤー</span>
      <div class="flex gap-[10px] items-center">
        <svg class="w-[11px] h-[11px]" viewBox="0 0 11 11"><path d="M5 2H1V10H9V6M5 6 10 1M6.500 1H10V4.500" fill="none" stroke="#ccc" stroke-width="1.200"/></svg>
        <svg class="w-[10px] h-[10px]" viewBox="0 0 11 11"><circle cx="4.500" cy="4.500" r="3.300" fill="none" stroke="#777"/><path d="M7 7 10 10" stroke="#777" stroke-width="1.300"/></svg>
        <svg class="w-[10px] h-[10px]" viewBox="0 0 10 10"><rect x=".500" y=".500" width="6" height="6" fill="#888" stroke="#ccc"/><rect x="3.500" y="3.500" width="6" height="6" fill="#777" stroke="#ccc"/><path d="M3 3H7V7H3Z" fill="#eee"/></svg>
        <svg class="w-[13px] h-[10px] -ml-px" viewBox="0 0 13 10"><path d="M1 0V4H4M5.500 1.500H12.500V9H5.500ZM9 3V7.500M7 5.200H11" fill="none" stroke="#ccc"/><path d="M3 2 6 4 3 6Z" fill="#ccc"/></svg>
        <svg class="w-[10px] h-[10px]" viewBox="0 0 10 10"><path d="M.500.500H9.500V9.500H.500ZM5 3V7M3 5H7" fill="none" stroke="#ccc"/></svg>
        <svg class="w-[9px] h-[10px]" viewBox="0 0 9 10"><path d="M0 1.500H9M3 1V.500H6V1M1 3H8V9.500H1ZM3.200 4V8.500M5.800 4V8.500" fill="none" stroke="#bbb"/></svg>
      </div>
    </div>
    <div class="h-[22px] shrink-0 mt-px bg-[#434343] flex text-[#9a9a9a] text-[8px] [font-feature-settings:'palt'] border-t-2 border-[#3a3a3a]">
      <button class="w-[39px] bg-[#535353] text-[#e6e6e6] flex items-center gap-[3px] pl-1"><svg class="w-1 h-[6px]"><use href="#cycle"/></svg>カラー</button><button class="w-[47px] border-r border-[#3c3c3c]">スウォッチ</button><button class="w-[56px] border-r border-[#3c3c3c]">アピアランス</button>
      <button class="ml-auto mr-1" aria-label="パネルメニュー"><svg class="w-2 h-2"><use href="#menu"/></svg></button>
    </div>
    <div class="flex pt-[5px] px-1 shrink-0">
      <div class="w-[32px] h-[98px] flex flex-col">
        <div class="flex gap-[6px] text-[#bbb]"><svg class="w-[10px] h-[10px]"><use href="#defaults"/></svg><svg class="w-[10px] h-[10px]"><use href="#swap"/></svg></div>
        <svg class="w-6 h-6 mt-1"><use href="#swatches"/></svg>
        <div class="flex items-center gap-[6px] mt-[28px] pl-[5px]"><svg class="w-2 h-[9px]" viewBox="0 0 8 9"><path d="M3 2V8H8" fill="none" stroke="#bbb" stroke-width="1.500"/><path d="M0 4 3 0 6 4Z" fill="#bbb"/></svg><span class="w-[11px] h-[11px] bg-black border border-[#ddd]"></span></div>
        <div class="flex mt-[7px]"><svg class="w-[10px] h-[10px]"><use href="#none"/></svg><i class="w-[10px] h-[10px] bg-[#0a0505]"></i><i class="w-[10px] h-[10px] bg-white"></i></div>
      </div>
      <div class="grid grid-rows-4 h-[78px] w-[150px] ml-1 text-[#d2d2d2]">
        <div class="flex items-center"><label for="c" class="w-[14px]">C</label><input type="range" aria-label="C" class="appearance-none w-[81px] h-[5px] border border-[#606060] bg-[#505050] [&::-webkit-slider-thumb]:appearance-none"><input id="c" class="w-[27px] h-4 ml-[6px] mr-[3px] bg-[#454545] border border-[#5c5c5c]">%</div>
        <div class="flex items-center"><label for="m" class="w-[14px]">M</label><input type="range" aria-label="M" class="appearance-none w-[81px] h-[5px] border border-[#606060] bg-[#505050] [&::-webkit-slider-thumb]:appearance-none"><input id="m" class="w-[27px] h-4 ml-[6px] mr-[3px] bg-[#454545] border border-[#5c5c5c]">%</div>
        <div class="flex items-center"><label for="y" class="w-[14px]">Y</label><input type="range" aria-label="Y" class="appearance-none w-[81px] h-[5px] border border-[#606060] bg-[#505050] [&::-webkit-slider-thumb]:appearance-none"><input id="y" class="w-[27px] h-4 ml-[6px] mr-[3px] bg-[#454545] border border-[#5c5c5c]">%</div>
        <div class="flex items-center"><label for="k" class="w-[14px]">K</label><input type="range" aria-label="K" class="appearance-none w-[81px] h-[5px] border border-[#606060] bg-[#505050] [&::-webkit-slider-thumb]:appearance-none"><input id="k" class="w-[27px] h-4 ml-[6px] mr-[3px] bg-[#454545] border border-[#5c5c5c]">%</div>
      </div>
    </div>
    <div class="grid ml-[5px] mr-[13px] mt-[6px] h-[146px] shrink-0">
      <div class="[grid-area:1/1] bg-[linear-gradient(90deg,#f01015,#f39020_9%,#f4ec20_16%,#98c422_24%,#6ab82e_33%,#62bd90_43%,#66c8da_51%,#2aa8e0_56%,#2668ae_61%,#1c459c_67%,#643f96_76%,#a04a98_84%,#ee2090_92%,#f01020)]"></div>
      <div class="[grid-area:1/1] z-10 bg-[linear-gradient(90deg,#a81820,#a85010_9%,#a8a808_17%,#38a828_26%,#1fae32_36%,#10ac80_47%,#0a7c98_53%,#08509a_59%,#002f92_67%,#501090_75%,#960082_84%,#a80850_92%,#a81028)] [mask-image:linear-gradient(transparent_50%,#000_67%)]"></div>
      <div class="[grid-area:1/1] z-20 bg-[linear-gradient(#fff,rgba(255,255,255,.75)_12%,rgba(255,255,255,.3)_28%,transparent_50%,rgba(0,0,0,0)_64%,rgba(0,0,0,.5)_78%,#000_98%)]"></div>
    </div>
  </aside>
</main>
</body>
</html>
